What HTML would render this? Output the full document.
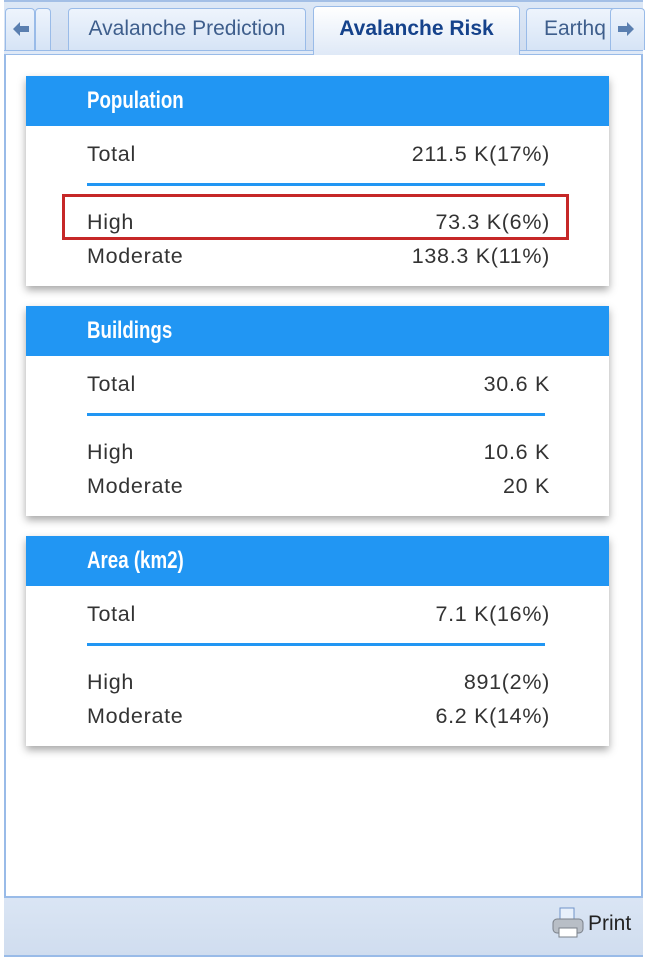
<!DOCTYPE html>
<html><head><style>
body{margin:0;width:645px;height:961px;background:#fff;font-family:"Liberation Sans",sans-serif;position:relative;overflow:hidden}
.a{position:absolute}
.tabstrip{left:4px;top:0;width:639px;height:55px;background:linear-gradient(#dde8f6,#cfdcef);border-top:2px solid #a3bfe6;box-sizing:border-box}
.tab{position:absolute;border:1px solid #99bbe8;border-bottom:none;border-radius:4px 4px 0 0;background:linear-gradient(#eef4fc,#d6e4f6);color:#3e5e8c;font-size:21px;text-align:center;box-sizing:border-box}
.card{position:absolute;left:26px;width:583px;height:210px;background:#fff;box-shadow:0 4px 8px rgba(0,0,0,.35)}
.hd{height:50px;background:#2196f3;color:#fff;font-weight:bold;font-size:24px;line-height:50px;padding-left:61px}
.hd span{display:inline-block;transform:scaleX(0.78);transform-origin:left center}
.row{position:absolute;left:61px;width:463px;font-size:21.5px;letter-spacing:0.7px;color:#333;display:flex;justify-content:space-between}
.ln{position:absolute;left:61px;width:458px;height:3px;background:#2196f3;top:107px}
</style></head><body>
<div class="a tabstrip"></div>
<div class="a" style="left:4px;top:50px;width:639px;height:5px;background:#dfe9f7;border-top:1px solid #99bbe8;border-bottom:1px solid #99bbe8;box-sizing:border-box"></div>
<div class="tab" style="left:5px;top:8px;width:30px;height:42px"><svg style="position:absolute;left:6px;top:12px" width="18" height="16" viewBox="0 0 18 16"><path d="M1 8 L8 1 L8 5 L17 5 L17 11 L8 11 L8 15 Z" fill="#5a7fb0"/></svg></div>
<div class="tab" style="left:35px;top:8px;width:16px;height:42px"></div>
<div class="tab" style="left:68px;top:8px;width:238px;height:42px;line-height:40px">Avalanche Prediction</div>
<div class="tab" style="left:313px;top:6px;width:207px;height:49px;line-height:44px;background:linear-gradient(#fff,#dfe9f7);font-weight:bold;color:#15428b">Avalanche Risk</div>
<div class="tab" style="left:526px;top:8px;width:90px;height:42px;line-height:40px;text-align:left;padding-left:17px;overflow:hidden">Earthq</div>
<div class="tab" style="left:610px;top:8px;width:35px;height:42px"><svg style="position:absolute;left:6px;top:12px" width="18" height="16" viewBox="0 0 18 16"><path d="M17 8 L10 1 L10 5 L1 5 L1 11 L10 11 L10 15 Z" fill="#5a7fb0"/></svg></div>
<div class="a" style="left:4px;top:55px;width:2px;height:842px;background:#99bbe8"></div>
<div class="a" style="left:641px;top:55px;width:2px;height:842px;background:#99bbe8"></div>
<div class="a" style="left:4px;top:896px;width:639px;height:61px;background:linear-gradient(#dae5f4,#d0ddef);border-top:2px solid #99bbe8;border-bottom:2px solid #99bbe8;box-sizing:border-box"></div>
<svg class="a" style="left:551px;top:907px" width="34" height="32" viewBox="0 0 34 32"><rect x="9" y="1" width="14" height="12" fill="#e8f0fb" stroke="#6f93c8"/><rect x="2" y="12" width="30" height="14" rx="4" fill="#b8bec6" stroke="#7a8089"/><rect x="8" y="21" width="18" height="9" fill="#fff" stroke="#7a8089"/></svg>
<div class="a" style="left:588px;top:912px;font-size:21px;color:#222">Print</div>

<div class="card" style="top:76px"><div class="hd"><span>Population</span></div>
<div class="row" style="top:66px"><span>Total</span><span>211.5 K(17%)</span></div><div class="ln"></div>
<div class="row" style="top:134px"><span>High</span><span>73.3 K(6%)</span></div>
<div class="row" style="top:168px"><span>Moderate</span><span>138.3 K(11%)</span></div></div>
<div class="a" style="left:62px;top:194px;width:507px;height:46px;border:3px solid #c62828;box-sizing:border-box"></div>

<div class="card" style="top:306px"><div class="hd"><span>Buildings</span></div>
<div class="row" style="top:66px"><span>Total</span><span>30.6 K</span></div><div class="ln"></div>
<div class="row" style="top:134px"><span>High</span><span>10.6 K</span></div>
<div class="row" style="top:168px"><span>Moderate</span><span>20 K</span></div></div>

<div class="card" style="top:536px"><div class="hd"><span>Area (km2)</span></div>
<div class="row" style="top:66px"><span>Total</span><span>7.1 K(16%)</span></div><div class="ln"></div>
<div class="row" style="top:134px"><span>High</span><span>891(2%)</span></div>
<div class="row" style="top:168px"><span>Moderate</span><span>6.2 K(14%)</span></div></div>
</body></html>
